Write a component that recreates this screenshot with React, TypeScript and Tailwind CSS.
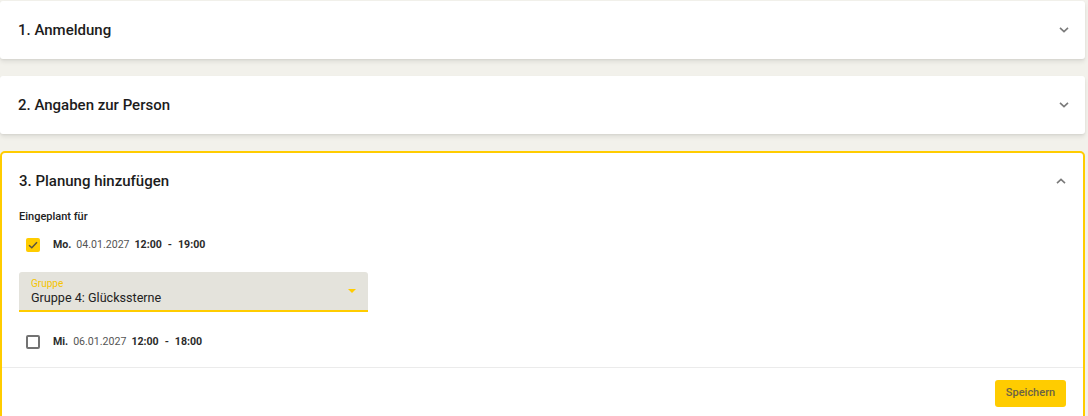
import React from 'react'

const font = { fontFamily: 'Roboto, "Liberation Sans", sans-serif' }

const Chevron = ({ up = false }: { up?: boolean }) => (
  <svg width="10" height="6" viewBox="0 0 10 6" className="text-[#7a7a7a]">
    <path
      d={up ? 'M1 5.2 L5 1.4 L9 5.2' : 'M1 0.8 L5 4.6 L9 0.8'}
      fill="none"
      stroke="currentColor"
      strokeWidth="1.6"
    />
  </svg>
)

const Check = ({ checked }: { checked: boolean }) =>
  checked ? (
    <span className="flex h-[14px] w-[14px] items-center justify-center rounded-[2px] bg-[#ffcc00]">
      <svg width="10" height="8" viewBox="0 0 10 8">
        <path d="M1 4.2 L3.8 6.8 L9 1.2" fill="none" stroke="#5a5340" strokeWidth="1.5" />
      </svg>
    </span>
  ) : (
    <span className="h-[14px] w-[14px] rounded-[2px] border-2 border-[#737373]" />
  )

const Slot = ({ checked, day, date, from, to }: { checked: boolean; day: string; date: string; from: string; to: string }) => (
  <div className="flex h-8 items-center pl-[7px] text-[10.6px]">
    <Check checked={checked} />
    <span className="ml-[13px] font-bold text-[#2b2b2b]">{day}</span>
    <span className="ml-[5px] text-[#555]">{date}</span>
    <span className="ml-[5px] font-bold text-[#2b2b2b]">
      {from}
      <span className="mx-[6px]">-</span>
      {to}
    </span>
  </div>
)

const ClosedPanel = ({ title }: { title: string }) => (
  <div className="flex h-[58px] items-center justify-between rounded-[3px] bg-white pl-[18px] pr-[16px] shadow-[0_3px_4px_rgba(0,0,0,0.08),0_1px_2px_rgba(0,0,0,0.05)]">
    <h2 className="text-[15px] font-medium text-[#1c1c1c]">{title}</h2>
    <Chevron />
  </div>
)

export default function App() {
  return (
    <div className="min-h-[416px] bg-[#f2f1eb] pt-px pr-[3px]" style={font}>
      <div className="flex flex-col gap-[17px]">
        <ClosedPanel title="1. Anmeldung" />
        <ClosedPanel title="2. Angaben zur Person" />

        <div className="rounded-[5px] border-2 border-[#ffcc00] bg-white">
          <div className="flex h-14 items-center justify-between pl-[17px] pr-[17px]">
            <h2 className="text-[15px] font-medium text-[#1c1c1c]">3. Planung hinzufügen</h2>
            <Chevron up />
          </div>

          <div className="px-[17px] pt-px pb-[9px]">
            <div className="text-[11px] font-medium leading-[14px] text-[#222]">Eingeplant für</div>
            <div className="mt-[5px]">
              <Slot checked day="Mo." date="04.01.2027" from="12:00" to="19:00" />
            </div>

            <div className="mt-[11px] flex h-10 w-[349px] items-center justify-between rounded-t-[3px] border-b-2 border-[#ffcc00] bg-[#e4e3dc] pl-3 pr-[12px]">
              <div className="flex flex-col pt-[2px]">
                <span className="text-[10px] leading-[12px] text-[#f5c400]">Gruppe</span>
                <span className="text-[12.6px] leading-[16px] text-[#222]">Gruppe 4: Glückssterne</span>
              </div>
              <svg width="8" height="4" viewBox="0 0 8 4">
                <path d="M0 0 L8 0 L4 4 Z" fill="#ffcc00" />
              </svg>
            </div>

            <div className="mt-[14px]">
              <Slot checked={false} day="Mi." date="06.01.2027" from="12:00" to="18:00" />
            </div>
          </div>

          <div className="h-px bg-[#ebebeb]" />

          <div className="flex justify-end px-[17px] pt-3 pb-4">
            <button className="h-[27px] w-[71px] rounded-[3px] bg-[#ffcc00] text-[11px] font-medium text-[#6b6245]">
              Speichern
            </button>
          </div>
        </div>
      </div>
    </div>
  )
}
